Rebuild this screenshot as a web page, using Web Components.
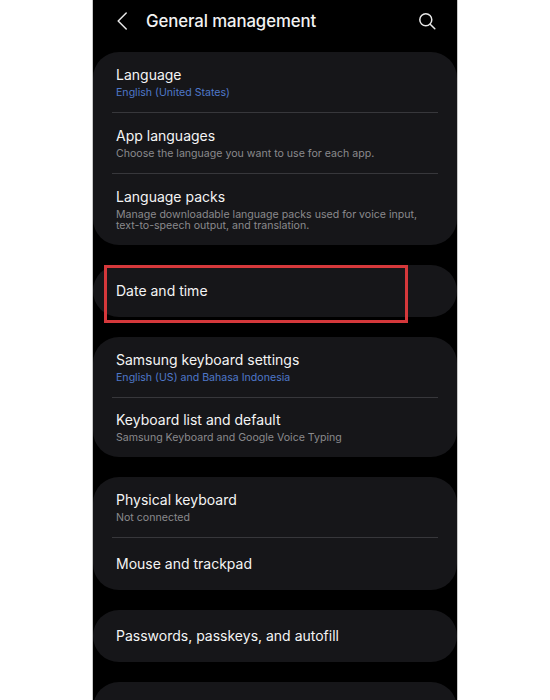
<!DOCTYPE html>
<html>
<head>
<meta charset="utf-8">
<style>
  html, body { margin: 0; height: 100%; background: #fff; overflow: hidden; }
  body { display: flex; justify-content: center; font-family: Inter, "Liberation Sans", sans-serif; }
</style>
</head>
<body>
<phone-screen>
  <top-bar title="General management"></top-bar>
  <settings-card>
    <setting-row label="Language" sub="English (United States)" accent></setting-row>
    <setting-row label="App languages" sub="Choose the language you want to use for each app."></setting-row>
    <setting-row label="Language packs" sub="Manage downloadable language packs used for voice input, text-to-speech output, and translation." tall></setting-row>
  </settings-card>
  <settings-card>
    <setting-row label="Date and time" single></setting-row>
    <mark-box></mark-box>
  </settings-card>
  <settings-card>
    <setting-row label="Samsung keyboard settings" sub="English (US) and Bahasa Indonesia" accent></setting-row>
    <setting-row label="Keyboard list and default" sub="Samsung Keyboard and Google Voice Typing"></setting-row>
  </settings-card>
  <settings-card>
    <setting-row label="Physical keyboard" sub="Not connected"></setting-row>
    <setting-row label="Mouse and trackpad" single></setting-row>
  </settings-card>
  <settings-card>
    <setting-row label="Passwords, passkeys, and autofill" single></setting-row>
  </settings-card>
  <settings-card>
    <setting-row label="" single></setting-row>
  </settings-card>
</phone-screen>
<script>
class PhoneScreen extends HTMLElement {
  constructor() {
    super();
    this.attachShadow({ mode: 'open' }).innerHTML = `
      <style>
        :host {
          display: flex;
          flex-direction: column;
          gap: 20px;
          width: 364px;
          height: 700px;
          overflow: hidden;
          background: #000;
          box-shadow: 0 0 0 1px #c9c9c9;
          color: #f2f2f2;
        }
      </style>
      <slot></slot>`;
  }
}

class TopBar extends HTMLElement {
  constructor() {
    super();
    this.attachShadow({ mode: 'open' }).innerHTML = `
      <style>
        :host {
          display: flex;
          flex: none;
          align-items: center;
          height: 42px;
          margin-bottom: -10px;
          padding: 0 21px 0 24px;
          font-size: 16.8px;
          font-weight: 500;
          letter-spacing: -0.1px;
        }
        .title { flex: 1; margin-left: 19px; }
        svg { display: block; fill: none; stroke: #e8e8e8; stroke-linecap: round; stroke-linejoin: round; }
      </style>
      <svg width="10" height="18" viewBox="0 0 10 18" stroke-width="1.5"><path d="M9.2 1 1.2 9l8 8"/></svg>
      <span class="title"></span>
      <svg width="18" height="18" viewBox="0 0 18 18" stroke-width="1.5"><circle cx="7.8" cy="7.8" r="6"/><path d="m12.2 12.2 4.6 4.6"/></svg>`;
    this.shadowRoot.querySelector('.title').textContent = this.getAttribute('title');
  }
}

class SettingsCard extends HTMLElement {
  constructor() {
    super();
    this.attachShadow({ mode: 'open' }).innerHTML = `
      <style>
        :host {
          display: block;
          position: relative;
          flex: none;
          background: #161619;
          border-radius: 26px;
        }
      </style>
      <slot></slot>`;
  }
}

class SettingRow extends HTMLElement {
  constructor() {
    super();
    this.attachShadow({ mode: 'open' }).innerHTML = `
      <style>
        :host {
          display: flex;
          flex-direction: column;
          justify-content: center;
          box-sizing: border-box;
          height: 61px;
          margin: 0 19px;
          padding: 0 4px;
          border-bottom: 1px solid #37373b;
        }
        :host(:last-of-type) { height: 59px; border-bottom: 0; }
        :host([tall]) { height: 71px; }
        :host([single]) { height: 52px; }
        .label { font-size: 14px; line-height: 18px; color: #f4f4f4; }
        .sub { margin-top: 3px; font-size: 10.6px; line-height: 12px; color: #8a8a8d; }
        :host([tall]) .sub { line-height: 11.5px; }
        :host([accent]) .sub { color: #4f78c9; }
      </style>
      <div class="label"></div>
      <div class="sub"></div>`;
    const root = this.shadowRoot;
    root.querySelector('.label').textContent = this.getAttribute('label');
    const sub = root.querySelector('.sub');
    if (this.hasAttribute('sub')) sub.textContent = this.getAttribute('sub');
    else sub.remove();
  }
}

class MarkBox extends HTMLElement {
  constructor() {
    super();
    this.attachShadow({ mode: 'open' }).innerHTML = `
      <style>
        :host {
          position: absolute;
          left: 11px;
          top: 0;
          width: 304px;
          height: 58px;
          box-sizing: border-box;
          border: 3px solid #d5383b;
        }
      </style>`;
  }
}

customElements.define('phone-screen', PhoneScreen);
customElements.define('top-bar', TopBar);
customElements.define('settings-card', SettingsCard);
customElements.define('setting-row', SettingRow);
customElements.define('mark-box', MarkBox);
</script>
</body>
</html>
